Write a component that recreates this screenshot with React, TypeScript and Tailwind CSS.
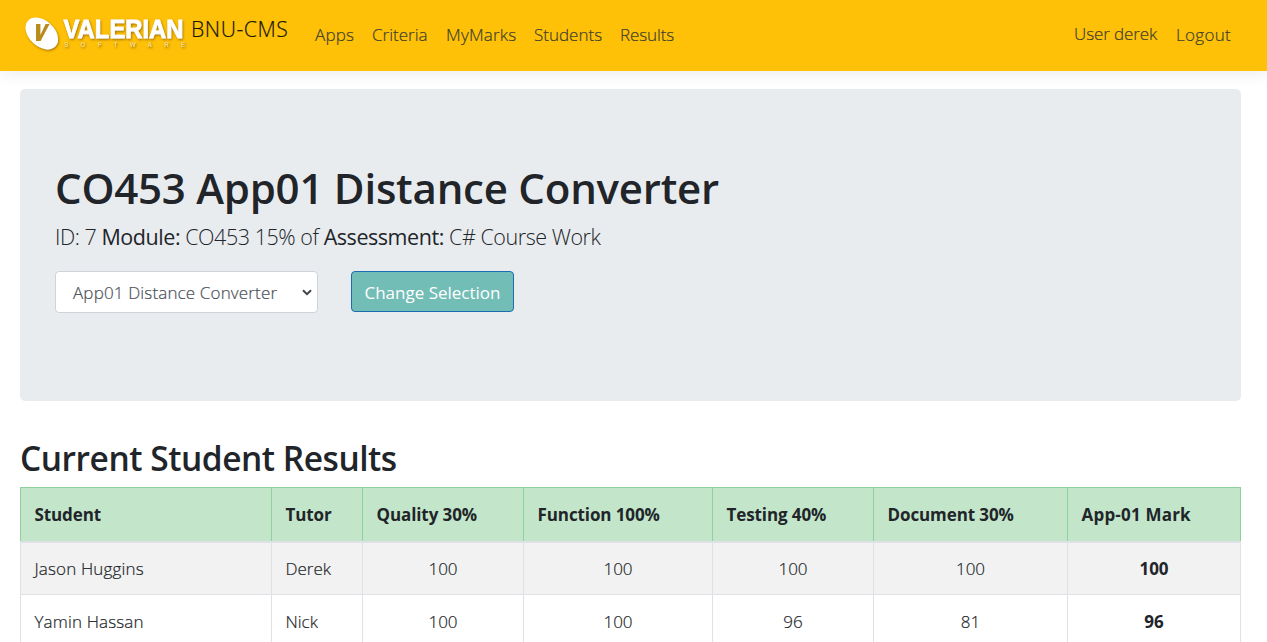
import React from "react";

const columns = [
  { label: "Student", width: 251 },
  { label: "Tutor", width: 91 },
  { label: "Quality 30%", width: 161 },
  { label: "Function 100%", width: 189 },
  { label: "Testing 40%", width: 161 },
  { label: "Document 30%", width: 194 },
  { label: "App-01 Mark", width: 173 },
];

const rows = [
  ["Jason Huggins", "Derek", "100", "100", "100", "100", "100"],
  ["Yamin Hassan", "Nick", "100", "100", "96", "81", "96"],
];

function Logo() {
  return (
    <svg className="h-[44px] w-[170px] shrink-0 overflow-visible" viewBox="0 0 170 44" role="img" aria-label="Valerian Software">
      <defs>
        <filter id="logo-shadow" x="-10%" y="-20%" width="120%" height="150%">
          <feDropShadow dx="0.8" dy="1.2" stdDeviation="1.3" floodColor="#7a4b00" floodOpacity="0.7" />
        </filter>
      </defs>
      <g filter="url(#logo-shadow)">
        <ellipse cx="21.8" cy="23.5" rx="18.8" ry="12.8" transform="rotate(43 21.8 23.5)" fill="#fff" />
        <path d="M16 14h4.4v11L25.6 14h4L20.6 31H16z" fill="#b98a1c" />
        <text
          x="43.5"
          y="28.2"
          textLength="120"
          lengthAdjust="spacingAndGlyphs"
          fill="#fff"
          stroke="#fff"
          strokeWidth="0.8"
          fontFamily="Liberation Sans, sans-serif"
          fontWeight="700"
          fontSize="26"
        >
          VALERIAN
        </text>
        <text
          x="44"
          y="37"
          textLength="121"
          lengthAdjust="spacing"
          fill="#f5d678"
          fontFamily="Liberation Sans, sans-serif"
          fontWeight="700"
          fontSize="6.5"
        >
          SOFTWARE
        </text>
      </g>
    </svg>
  );
}

export default function App() {
  return (
    <div className="h-[642px] overflow-hidden bg-white font-['Open_Sans','Noto_Sans',sans-serif] text-[17px] font-light text-[#212529] [-webkit-text-stroke:0.2px]">
      <header className="flex h-[71px] items-start bg-[#ffc107] pl-5 shadow-[0_4px_14px_rgba(0,0,0,0.07)]">
        <div className="mt-[10px] flex">
          <Logo />
          <span className="ml-px mt-[4px] w-[124px] whitespace-nowrap text-[21.2px] leading-[30px] tracking-[0.55px] text-[#15170a]">BNU-CMS</span>
        </div>
        <nav className="flex whitespace-nowrap pt-[23px] leading-6 text-[#40402f]">
          <a className="w-[57px] tracking-[0.2px]">Apps</a>
          <a className="w-[74px]">Criteria</a>
          <a className="w-[88px] tracking-[0.2px]">MyMarks</a>
          <a className="w-[86px]">Students</a>
          <a className="tracking-[-0.1px]">Results</a>
        </nav>
        <div className="ml-auto flex whitespace-nowrap leading-6 tracking-[-0.1px] text-[#40402f]">
          <span className="w-[102px] pt-[22px]">User derek</span>
          <a className="w-[91px] pt-[23px] tracking-[0.3px]">Logout</a>
        </div>
      </header>
      <main className="ml-5 w-[1221px] pt-[18px]">
        <section className="h-[312px] rounded-[5px] bg-[#e9ecef] px-[35px] pt-[72px]">
          <h1 className="whitespace-nowrap text-[42px] font-semibold leading-[54px] tracking-[-0.23px] [-webkit-text-stroke:0px]">
            CO453 App01 Distance Converter
          </h1>
          <p className="mt-[6px] whitespace-nowrap text-[21.5px] font-light leading-[32px] tracking-[-0.45px] [-webkit-text-stroke:0px]">
            ID: 7 <b className="font-normal">Module:</b> CO453 15% of <b className="font-normal">Assessment:</b> C# Course Work
          </p>
          <div className="mt-[18px] flex items-start whitespace-nowrap">
            <div className="flex h-[42px] w-[263px] items-center justify-between rounded-[4px] border border-[#ced4da] bg-white pl-[17px] pr-[5px] text-[#495057]">
              <span className="pt-px tracking-[0.15px]">App01 Distance Converter</span>
              <svg className="h-[7px] w-[10px]" viewBox="0 0 10 7">
                <path d="M1 1.2 5 5.2 9 1.2" fill="none" stroke="#3f454a" strokeWidth="2" />
              </svg>
            </div>
            <button className="ml-[33px] h-[41px] w-[163px] rounded-[4px] border border-[#1b6db0] bg-[#72bdb6] pt-[2px] font-normal text-white [-webkit-text-stroke:0px]">
              Change Selection
            </button>
          </div>
        </section>
        <h2 className="mt-[35px] whitespace-nowrap text-[33.5px] font-semibold leading-[44px] tracking-[-0.47px] [-webkit-text-stroke:0px]">
          Current Student Results
        </h2>
        <table className="mt-[7px] w-[1221px] table-fixed border-collapse">
          <colgroup>
            {columns.map((c) => (
              <col key={c.label} style={{ width: c.width }} />
            ))}
          </colgroup>
          <thead>
            <tr className="h-[54px] bg-[#c3e6cb]">
              {columns.map((c) => (
                <th key={c.label} className="whitespace-nowrap border border-b-2 border-[#8fd19e] border-b-[#dee2e6] py-0 pl-[13.5px] text-left font-bold tracking-[-0.1px] last:tracking-[0.2px] [-webkit-text-stroke:0px]">
                  {c.label}
                </th>
              ))}
            </tr>
          </thead>
          <tbody>
            {rows.map((r) => (
              <tr key={r[0]} className="h-[53px] odd:bg-[#f2f2f2]">
                {r.map((v, i) => (
                  <td
                    key={i}
                    className={`whitespace-nowrap border border-[#dee2e6] pb-0 pt-px ${i < 2 ? "pl-[13.5px] text-left" : "text-center"} ${i === 0 ? "tracking-[0.15px]" : ""} ${i === 6 ? "font-bold [-webkit-text-stroke:0px]" : ""}`}
                  >
                    {v}
                  </td>
                ))}
              </tr>
            ))}
          </tbody>
        </table>
      </main>
    </div>
  );
}
